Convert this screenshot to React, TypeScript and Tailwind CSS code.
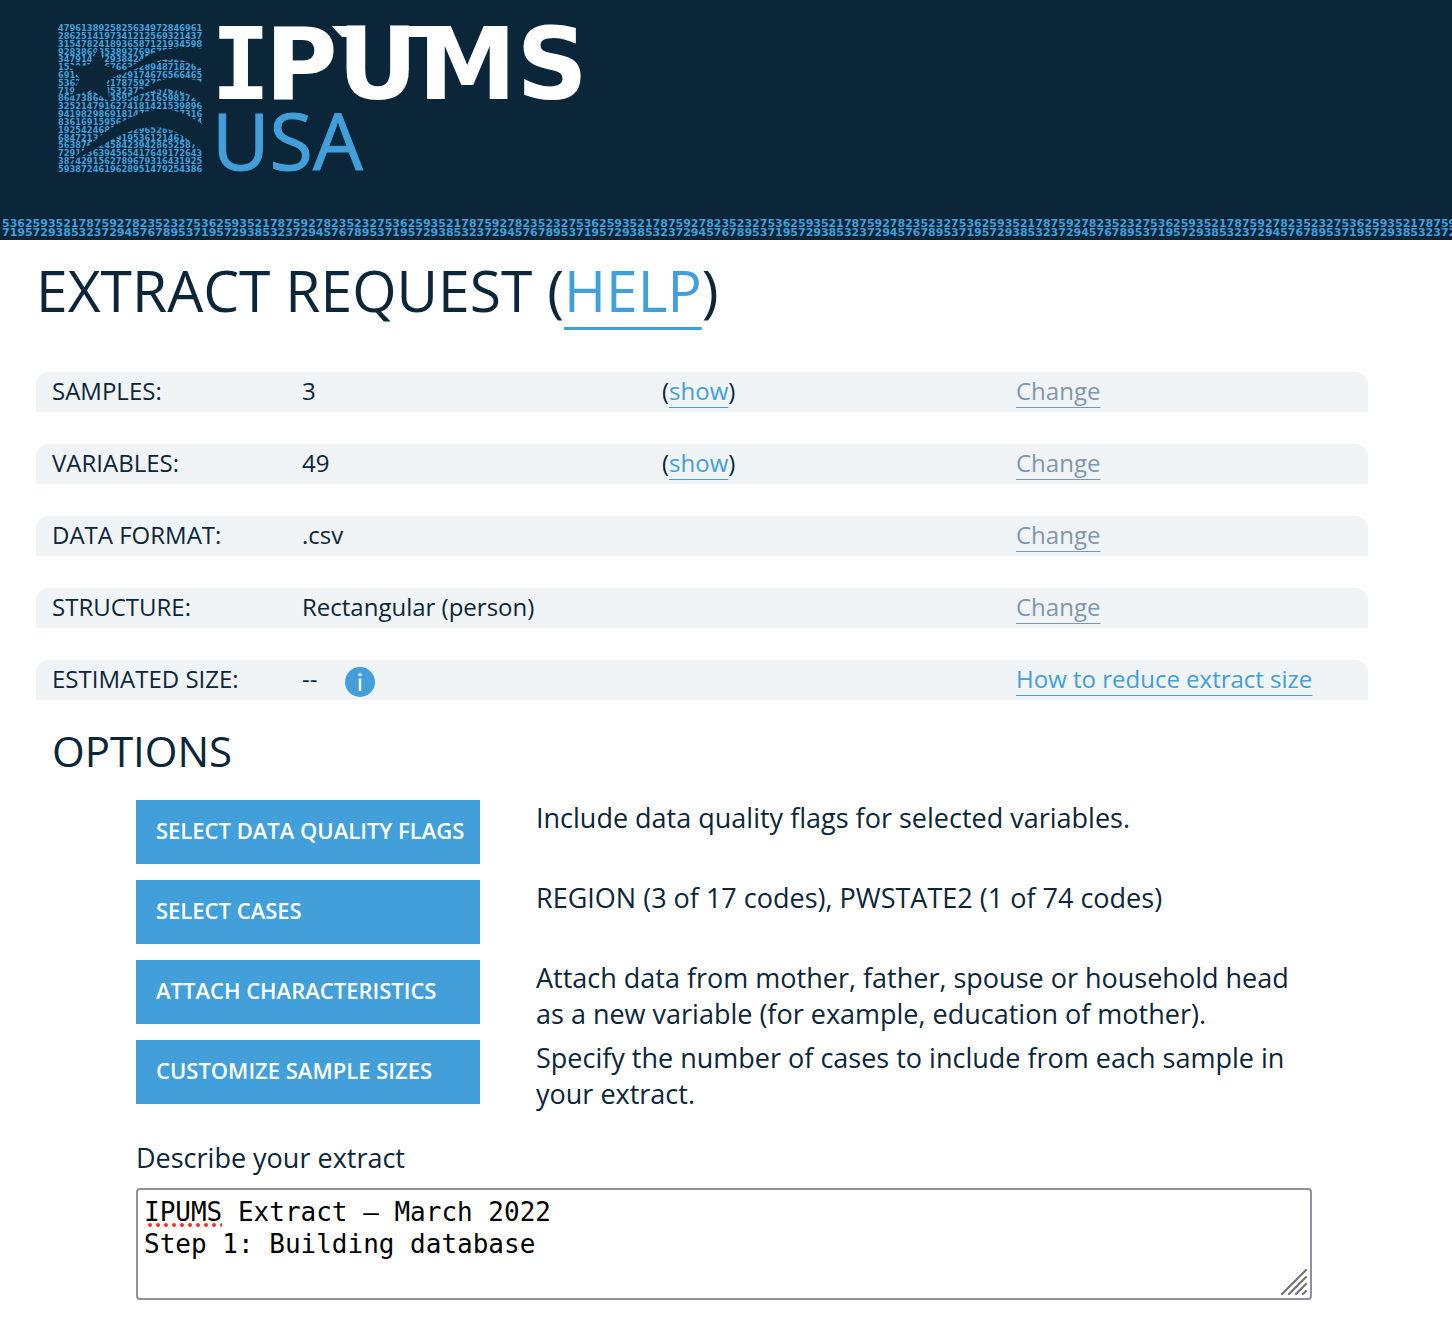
import { Fragment, type ReactNode } from "react";

const EMBLEM_ROWS = [
  "4796138925825634972846961",
  "2862514197341212569321437",
  "3154782418936587121934598",
  "9283869353892769675241836",
  "3479147729384247294521836",
  "1539472467663528948718263",
  "6914728351629174676566465",
  "5362593521787592782352327",
  "7195729385323729457678953",
  "8647386423595872165983724",
  "3252147916274181421539896",
  "9419829869181472153727316",
  "8361691595642783612945154",
  "1925424681753296528965174",
  "6847213482919536121461839",
  "5638761245842394286525873",
  "7291536394565417649172643",
  "3874291562789679316431925",
  "5938724619628951479254386",
];

const STRIP_TOP = "5362593521787592782352327".repeat(16);
const STRIP_BOTTOM = "7195729385323729457678953".repeat(16);

function Emblem() {
  return (
    <svg viewBox="0 0 436 444" className="h-[148px] w-[145px] overflow-visible" aria-hidden="true">
      <g className="fill-[#429fd9] font-['DejaVu_Sans'] font-bold" fontSize="25">
        {EMBLEM_ROWS.map((row, i) => (
          <text key={i} x="0" y={21 + i * 23.5}>
            {row}
          </text>
        ))}
      </g>
      <g className="fill-[#0c2639]">
        <path d="M124 68 L140 124 L198 143 L146 172 L155 234 L102 198 L40 216 L66 164 L32 122 L92 126 Z" />
        <path d="M150 158 C200 145 235 118 270 94 C310 74 380 66 440 74 V140 C400 108 350 100 310 108 C260 118 215 150 150 158 Z" />
        <path d="M190 228 C240 212 262 186 300 172 C350 154 400 160 440 178 V246 C400 208 360 194 325 194 C280 196 240 216 190 228 Z" />
        <path d="M34 414 C80 376 120 338 170 306 C220 277 270 256 316 256 C360 258 405 278 440 306 V390 C390 338 345 310 285 309 C190 312 140 370 34 414 Z" />
      </g>
    </svg>
  );
}

function Wordmark() {
  return (
    <svg
      viewBox="0 0 370 152"
      className="h-[152px] w-[370px] overflow-visible"
      role="img"
      aria-label="IPUMS USA"
    >
      <g className="fill-white font-['DejaVu_Sans'] font-bold" fontSize="99">
        <text x="-7" y="75" className="font-['DejaVu_Sans_Mono']">
          I
        </text>
        <text x="47" y="75">
          PUMS
        </text>
        <path d="M114 2 H140 V13 H124 Q118 7 114 2 Z" />
        <path d="M180 2 H220 V13 H180 Z" />
      </g>
      <text
        x="-6"
        y="146"
        fontSize="79"
        strokeWidth="1"
        className="fill-[#429fd9] stroke-[#429fd9] font-['Open_Sans']"
      >
        USA
      </text>
    </svg>
  );
}

function TextLink({ children, muted = false }: { children: ReactNode; muted?: boolean }) {
  return (
    <a
      href="#"
      className={
        "underline decoration-1 underline-offset-[7px] [text-decoration-skip-ink:none] " +
        (muted ? "text-[#7f98ad]" : "text-[#429fd9]")
      }
    >
      {children}
    </a>
  );
}

function InfoButton() {
  return (
    <button type="button" aria-label="About estimated size" className="mt-[7px] ml-7 size-[30px]">
      <svg viewBox="0 0 30 30" className="size-full">
        <circle cx="15" cy="15" r="15" fill="#429fd9" />
        <circle cx="15" cy="7.6" r="1.7" fill="#fff" />
        <path d="M15 11.5 V24" stroke="#fff" strokeWidth="2.4" />
      </svg>
    </button>
  );
}

function Show() {
  return (
    <>
      (<TextLink>show</TextLink>)
    </>
  );
}

const SUMMARY: { label: string; value: ReactNode; extra?: ReactNode; action: ReactNode }[] = [
  { label: "SAMPLES:", value: "3", extra: <Show />, action: <TextLink muted>Change</TextLink> },
  { label: "VARIABLES:", value: "49", extra: <Show />, action: <TextLink muted>Change</TextLink> },
  { label: "DATA FORMAT:", value: ".csv", action: <TextLink muted>Change</TextLink> },
  { label: "STRUCTURE:", value: "Rectangular (person)", action: <TextLink muted>Change</TextLink> },
  {
    label: "ESTIMATED SIZE:",
    value: (
      <>
        --
        <InfoButton />
      </>
    ),
    action: <TextLink>How to reduce extract size</TextLink>,
  },
];

const OPTIONS = [
  { name: "SELECT DATA QUALITY FLAGS", text: "Include data quality flags for selected variables." },
  { name: "SELECT CASES", text: "REGION (3 of 17 codes), PWSTATE2 (1 of 74 codes)" },
  {
    name: "ATTACH CHARACTERISTICS",
    text: "Attach data from mother, father, spouse or household head as a new variable (for example, education of mother).",
  },
  {
    name: "CUSTOMIZE SAMPLE SIZES",
    text: "Specify the number of cases to include from each sample in your extract.",
  },
];

export default function App() {
  return (
    <div className="bg-white pb-6 font-['Open_Sans',sans-serif] text-[#0c2639]">
      <header className="bg-[#0c2639] pt-6">
        <a href="#" className="ml-[58px] flex h-[152px] w-fit gap-[15px]">
          <Emblem />
          <Wordmark />
        </a>
        <div
          aria-hidden="true"
          className="mt-[43px] overflow-hidden pb-[3px] pl-[2px] font-['DejaVu_Sans'] text-[11px] leading-[9px] font-bold whitespace-nowrap text-[#429fd9]"
        >
          <p>{STRIP_TOP}</p>
          <p>{STRIP_BOTTOM}</p>
        </div>
      </header>

      <main className="pr-21 pl-9">
        <h1 className="pt-3 text-[57px] leading-[76px]">
          EXTRACT REQUEST (
          <a
            href="#"
            className="text-[#429fd9] underline decoration-[3px] underline-offset-[15px]"
          >
            HELP
          </a>
          )
        </h1>

        <dl className="mt-11 grid gap-8 text-2xl leading-[38px]">
          {SUMMARY.map((row) => (
            <div
              key={row.label}
              className="grid h-10 grid-cols-[250px_360px_354px_1fr] rounded-t-xl bg-[#f0f4f7] pl-4"
            >
              <dt>{row.label}</dt>
              <dd className="flex">{row.value}</dd>
              <dd>{row.extra}</dd>
              <dd>{row.action}</dd>
            </div>
          ))}
        </dl>

        <h2 className="mt-6 pl-4 text-[42px] leading-[54px]">OPTIONS</h2>

        <div className="mt-[22px] mr-14 ml-[100px] grid grid-cols-[344px_1fr] gap-x-14 gap-y-4">
          {OPTIONS.map((option) => (
            <Fragment key={option.name}>
              <button
                type="button"
                className="h-16 bg-[#429fd9] px-5 pb-1 text-left text-[22px] font-semibold whitespace-nowrap text-white"
              >
                {option.name}
              </button>
              <p className="-mb-2 text-[27px] leading-9">{option.text}</p>
            </Fragment>
          ))}
        </div>

        <div className="mt-9 mr-14 ml-[100px]">
          <label htmlFor="description" className="block text-[27px] leading-9">
            Describe your extract
          </label>
          <div className="relative mt-3">
            <textarea
              id="description"
              spellCheck={false}
              className="block h-28 w-full resize-none rounded border-2 border-[#8f8f9d] px-[6px] py-[6px] font-['DejaVu_Sans_Mono',monospace] text-[26px] leading-8 text-black outline-none"
              defaultValue={"IPUMS Extract – March 2022\nStep 1: Building database"}
            />
            <svg
              viewBox="0 0 74 4"
              className="pointer-events-none absolute top-[35px] left-3 h-1 w-[74px]"
              aria-hidden="true"
            >
              <path d="M2 2 H80" stroke="#ee3124" strokeWidth="4" strokeLinecap="round" strokeDasharray="0 8" />
            </svg>
            <svg
              viewBox="0 0 26 26"
              className="pointer-events-none absolute right-[5px] bottom-[5px] size-[26px]"
              aria-hidden="true"
            >
              <path
                d="M1 25 L25 1 M8 25 L25 8 M15 25 L25 15 M22 25 L25 22"
                stroke="#6e6e6e"
                strokeWidth="2"
                strokeLinecap="round"
              />
            </svg>
          </div>
        </div>
      </main>
    </div>
  );
}
